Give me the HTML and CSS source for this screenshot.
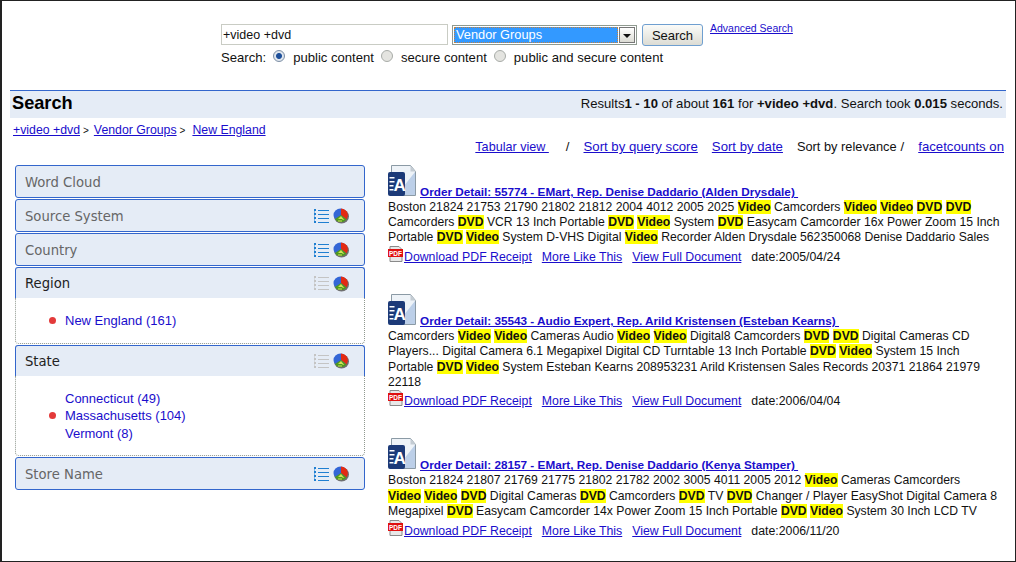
FILE: index.html
```html
<!DOCTYPE html>
<html lang="en">
<head>
    <meta charset="UTF-8">
    <title>Search</title>
    <link rel="stylesheet" href="styles.css">
</head>
<body>
    <svg class="icon-defs" width="0" height="0">
        <defs>
            <g id="list-icon">
                <path d="M0 0h2v2H0zM0 4h2v2H0zM0 8h2v2H0zM0 12h2v2H0zM0 2.500h1v1H0zM0 6.500h1v1H0zM0 10.500h1v1H0z"/>
                <path d="M4 1h11v1H4zM4 5h11v1H4zM4 9h11v1H4zM4 13h11v1H4z"/>
            </g>
            <g id="pie-icon">
                <ellipse cx="8.500" cy="8.500" rx="7.500" ry="7" fill="#6f6f6f"/>
                <ellipse cx="7.500" cy="7" rx="7" ry="6.500" fill="#3366d6"/>
                <path d="M8 7V.500a7 6.500 0 0 1 6.500 8.500l-1 2.500z" fill="#e32a12"/>
                <path d="M8 7l5.500 4.500a7 6.500 0 0 1-11.500-.500z" fill="#4f9a1c"/>
                <path d="M5 11l3-3 2.500 3zM9 12l1-1 1.500 1zM5 12.500h4v1H5z" fill="#cfe25a"/>
            </g>
            <g id="doc-icon">
                <path d="M3.500 .500h19l5 6v24h-24z" fill="#eef3f8" stroke="#8b9aa5"/>
                <path d="M22.500 .500l5 6h-5z" fill="#c4ccd3"/>
                <path d="M12 26l15-19v23H12z" fill="#bccfe8"/>
                <rect x="0" y="7" width="17" height="24" rx="2" fill="#1c3a78"/>
                <rect x="1.500" y="12" width="5" height="1.500" fill="#fff"/>
                <rect x="1.500" y="16" width="5" height="1.500" fill="#fff"/>
                <rect x="1.500" y="20" width="4" height="1.500" fill="#fff"/>
                <rect x="1.500" y="24" width="4" height="1.500" fill="#fff"/>
                <text class="doc-letter" x="5.500" y="26">A</text>
            </g>
            <g id="pdf-icon">
                <path d="M2 .500h9l3 3v12H2z" fill="#e8e8e8" stroke="#8a8a8a"/>
                <rect x="0" y="3" width="15" height="8" fill="#e01010"/>
                <text class="pdf-letters" x="1" y="9.500">PDF</text>
            </g>
        </defs>
    </svg>

    <form class="search-form">
        <div class="search-row">
            <input class="query" type="text" value="+video +dvd">
            <div class="fake-select">
                <span class="fake-select-value">Vendor Groups</span>
                <span class="fake-select-arrow"></span>
            </div>
            <button class="search-btn" type="button">Search</button>
            <a class="advanced" href="#">Advanced Search</a>
        </div>
        <div class="scope-row">
            <span class="scope-label">Search:</span>
            <label class="scope"><span class="radio checked"></span>public content</label>
            <label class="scope"><span class="radio"></span>secure content</label>
            <label class="scope"><span class="radio"></span>public and secure content</label>
        </div>
    </form>

    <div class="title-bar">
        <h1 class="title">Search</h1>
        <div class="summary">Results<b>1 - 10</b> of about <b>161</b> for <b>+video +dvd</b>. Search took <b>0.015</b> seconds.</div>
    </div>

    <div class="crumbs"><a href="#">+video +dvd</a><span class="sep">&gt;</span><a href="#">Vendor Groups</a><span class="sep">&gt;</span><a href="#">New England</a></div>

    <div class="sort-row">
        <a class="tabular" href="#">Tabular view&nbsp;</a>
        <span class="slash">/</span>
        <a href="#">Sort by query score</a>
        <a href="#">Sort by date</a>
        <span class="relevance">Sort by relevance</span>
        <span class="slash-tight">/</span>
        <a href="#">facetcounts on</a>
    </div>

    <div class="main">
        <div class="facets">
            <div class="facet">
                <div class="facet-head"><span class="facet-name">Word Cloud</span></div>
            </div>
            <div class="facet">
                <div class="facet-head">
                    <span class="facet-name">Source System</span>
                    <svg class="list-icon" width="15" height="15" viewBox="0 0 15 15"><use href="#list-icon"/></svg>
                    <svg class="pie-icon" width="16" height="16" viewBox="0 0 16 16"><use href="#pie-icon"/></svg>
                </div>
            </div>
            <div class="facet">
                <div class="facet-head">
                    <span class="facet-name">Country</span>
                    <svg class="list-icon" width="15" height="15" viewBox="0 0 15 15"><use href="#list-icon"/></svg>
                    <svg class="pie-icon" width="16" height="16" viewBox="0 0 16 16"><use href="#pie-icon"/></svg>
                </div>
            </div>
            <div class="facet open">
                <div class="facet-head">
                    <span class="facet-name">Region</span>
                    <svg class="list-icon off" width="15" height="15" viewBox="0 0 15 15"><use href="#list-icon"/></svg>
                    <svg class="pie-icon" width="16" height="16" viewBox="0 0 16 16"><use href="#pie-icon"/></svg>
                </div>
                <ul class="facet-list">
                    <li class="picked"><a href="#">New England (161)</a></li>
                </ul>
            </div>
            <div class="facet open">
                <div class="facet-head">
                    <span class="facet-name">State</span>
                    <svg class="list-icon off" width="15" height="15" viewBox="0 0 15 15"><use href="#list-icon"/></svg>
                    <svg class="pie-icon" width="16" height="16" viewBox="0 0 16 16"><use href="#pie-icon"/></svg>
                </div>
                <ul class="facet-list">
                    <li><a href="#">Connecticut (49)</a></li>
                    <li class="picked"><a href="#">Massachusetts (104)</a></li>
                    <li><a href="#">Vermont (8)</a></li>
                </ul>
            </div>
            <div class="facet">
                <div class="facet-head">
                    <span class="facet-name">Store Name</span>
                    <svg class="list-icon" width="15" height="15" viewBox="0 0 15 15"><use href="#list-icon"/></svg>
                    <svg class="pie-icon" width="16" height="16" viewBox="0 0 16 16"><use href="#pie-icon"/></svg>
                </div>
            </div>
        </div>

        <div class="results">
            <div class="result">
                <div class="result-title">
                    <svg class="doc-icon" width="29" height="31" viewBox="0 0 29 31"><use href="#doc-icon"/></svg>
                    <a href="#">Order Detail: 55774 - EMart, Rep. Denise Daddario (Alden Drysdale)&nbsp;</a>
                </div>
                <p class="snippet">Boston 21824 21753 21790 21802 21812 2004 4012 2005 2025 <mark>Video</mark> Camcorders <mark>Video</mark> <mark>Video</mark> <mark>DVD</mark> <mark>DVD</mark><br>Camcorders <mark>DVD</mark> VCR 13 Inch Portable <mark>DVD</mark> <mark>Video</mark> System <mark>DVD</mark> Easycam Camcorder 16x Power Zoom 15 Inch<br>Portable <mark>DVD</mark> <mark>Video</mark> System D-VHS Digital <mark>Video</mark> Recorder Alden Drysdale 562350068 Denise Daddario Sales</p>
                <div class="result-links">
                    <svg class="pdf-icon" width="15" height="16" viewBox="0 0 15 16"><use href="#pdf-icon"/></svg>
                    <a href="#">Download PDF Receipt</a>
                    <a href="#">More Like This</a>
                    <a href="#">View Full Document</a>
                    <span>date:2005/04/24</span>
                </div>
            </div>
            <div class="result">
                <div class="result-title">
                    <svg class="doc-icon" width="29" height="31" viewBox="0 0 29 31"><use href="#doc-icon"/></svg>
                    <a href="#">Order Detail: 35543 - Audio Expert, Rep. Arild Kristensen (Esteban Kearns)&nbsp;</a>
                </div>
                <p class="snippet">Camcorders <mark>Video</mark> <mark>Video</mark> Cameras Audio <mark>Video</mark> <mark>Video</mark> Digital8 Camcorders <mark>DVD</mark> <mark>DVD</mark> Digital Cameras CD<br>Players... Digital Camera 6.1 Megapixel Digital CD Turntable 13 Inch Portable <mark>DVD</mark> <mark>Video</mark> System 15 Inch<br>Portable <mark>DVD</mark> <mark>Video</mark> System Esteban Kearns 208953231 Arild Kristensen Sales Records 20371 21864 21979<br>22118</p>
                <div class="result-links">
                    <svg class="pdf-icon" width="15" height="16" viewBox="0 0 15 16"><use href="#pdf-icon"/></svg>
                    <a href="#">Download PDF Receipt</a>
                    <a href="#">More Like This</a>
                    <a href="#">View Full Document</a>
                    <span>date:2006/04/04</span>
                </div>
            </div>
            <div class="result">
                <div class="result-title">
                    <svg class="doc-icon" width="29" height="31" viewBox="0 0 29 31"><use href="#doc-icon"/></svg>
                    <a href="#">Order Detail: 28157 - EMart, Rep. Denise Daddario (Kenya Stamper)&nbsp;</a>
                </div>
                <p class="snippet">Boston 21824 21807 21769 21775 21802 21782 2002 3005 4011 2005 2012 <mark>Video</mark> Cameras Camcorders<br><mark>Video</mark> <mark>Video</mark> <mark>DVD</mark> Digital Cameras <mark>DVD</mark> Camcorders <mark>DVD</mark> TV <mark>DVD</mark> Changer / Player EasyShot Digital Camera 8<br>Megapixel <mark>DVD</mark> Easycam Camcorder 14x Power Zoom 15 Inch Portable <mark>DVD</mark> <mark>Video</mark> System 30 Inch LCD TV</p>
                <div class="result-links">
                    <svg class="pdf-icon" width="15" height="16" viewBox="0 0 15 16"><use href="#pdf-icon"/></svg>
                    <a href="#">Download PDF Receipt</a>
                    <a href="#">More Like This</a>
                    <a href="#">View Full Document</a>
                    <span>date:2006/11/20</span>
                </div>
            </div>
        </div>
    </div>
</body>
</html>
```

FILE: styles.css
```css
* {
    margin: 0;
    padding: 0;
    box-sizing: border-box;
}

html, body {
    height: 562px;
    overflow: hidden;
}

body {
    font-family: "Liberation Sans", Arial, sans-serif;
    font-size: 12.2px;
    color: #111;
    background: #fff;
    border: 1px solid #222;
    border-left-width: 2px;
    padding: 0 9px 0 8px;
}

a {
    color: #1a0dcc;
}

.icon-defs {
    position: absolute;
}

.doc-letter {
    font-family: "Liberation Sans", Arial, sans-serif;
    font-size: 17px;
    font-weight: bold;
    fill: #fff;
}

.pdf-letters {
    font-family: "Liberation Sans", Arial, sans-serif;
    font-size: 6.500px;
    font-weight: bold;
    fill: #fff;
}

.search-form {
    height: 89px;
    padding: 22px 0 0 211px;
}

.search-row {
    display: flex;
    align-items: flex-start;
    height: 22px;
}

.query {
    width: 227px;
    height: 21px;
    margin-top: 1px;
    padding-left: 1px;
    border: 1px solid #c9ccc4;
    font-family: inherit;
    font-size: 12.500px;
    color: #111;
}

.fake-select {
    width: 185px;
    height: 20px;
    margin: 2px 0 0 4px;
    padding: 1px;
    display: flex;
    border: 1px solid #8f9a90;
    background: #fff;
}

.fake-select-value {
    flex: 1;
    padding-left: 2px;
    background: #3399ff;
    color: #fff;
    font-size: 12.800px;
    line-height: 16px;
    outline: 1px dotted #c08040;
    outline-offset: -1px;
}

.fake-select-arrow {
    width: 16px;
    margin-left: 1px;
    position: relative;
    background: linear-gradient(#fff, #dcdcd4);
    border: 1px solid #777;
}

.fake-select-arrow::after {
    content: "";
    position: absolute;
    left: 3px;
    top: 6px;
    border-left: 4px solid transparent;
    border-right: 4px solid transparent;
    border-top: 4px solid #111;
}

.search-btn {
    width: 61px;
    height: 22px;
    margin: 1px 0 0 5px;
    border: 1px solid #6f9fd0;
    border-radius: 3px;
    background: linear-gradient(#fbfbf8, #dcdcd4);
    font-family: inherit;
    font-size: 13px;
    color: #111;
}

.advanced {
    margin: 0 0 0 7px;
    font-size: 10.500px;
    line-height: 11px;
}

.scope-row {
    display: flex;
    align-items: center;
    height: 18px;
    margin-top: 3px;
    font-size: 13.100px;
}

.scope-label {
    margin-right: 7px;
}

.scope {
    display: flex;
    align-items: center;
    margin-right: 7px;
}

.radio {
    width: 12px;
    height: 12px;
    margin-right: 8px;
    margin-top: -3px;
    border-radius: 50%;
    background: #e4e4e0;
    border: 1px solid #a8aca8;
}

.radio.checked {
    background: radial-gradient(circle, #1d4f9a 0 2.500px, #dfe6ee 3.500px);
    border-color: #7d8fa5;
}

.title-bar {
    display: flex;
    justify-content: space-between;
    align-items: center;
    height: 28px;
    padding: 0 3px 2px 2px;
    border-top: 1px solid #3366cc;
    background: #e5ecf6;
}

.title {
    font-size: 18.200px;
    color: #000;
}

.summary {
    font-size: 13.100px;
}

.crumbs {
    height: 21px;
    padding: 5px 0 0 3px;
    font-size: 12.300px;
    line-height: 14px;
}

.sep {
    margin: 0 5px 0 3px;
    font-size: 10px;
}

.sep + a + .sep {
    margin-right: 7px;
}

.sort-row {
    display: flex;
    justify-content: flex-end;
    align-items: baseline;
    height: 18px;
    padding-right: 2px;
    gap: 14px;
    font-size: 13.200px;
    line-height: 15px;
}

.tabular {
    font-size: 12.600px;
}

.relevance {
    font-size: 12.800px;
}

.slash {
    margin: 0 0 0 3px;
}

.slash-tight {
    margin: 0 0 0 -10px;
}

.main {
    display: flex;
    margin-top: 8px;
    align-items: flex-start;
}

.facets {
    width: 350px;
    margin-left: 5px;
}

.facet {
    margin-bottom: 1px;
}

.facet-head {
    display: flex;
    align-items: center;
    height: 33px;
    padding: 1px 15px 0 9px;
    background: #e5ecf6;
    border: 1px solid #3366cc;
    border-radius: 3px;
}

.facet.open .facet-head {
    height: 31px;
    border-bottom: none;
    border-radius: 3px 3px 0 0;
}

.facet-name {
    flex: 1;
    font-family: "DejaVu Sans", Verdana, sans-serif;
    font-size: 13.200px;
    color: #666;
}

.facet.open .facet-name {
    color: #222;
}

.list-icon {
    fill: #1f7fd1;
    margin-right: 4px;
}

.list-icon.off {
    fill: #c4c4c4;
}

.facet-list {
    list-style: none;
    padding: 14px 0 13px 49px;
    font-size: 13px;
    border: 1px dotted #8f988f;
    border-top: none;
    border-radius: 0 0 4px 4px;
}

.facet-list li {
    position: relative;
    line-height: 17.500px;
}

.facet-list a {
    text-decoration: none;
}

.picked::before {
    content: "";
    position: absolute;
    left: -16px;
    top: 5px;
    width: 7px;
    height: 7px;
    border-radius: 50%;
    background: #e33a3a;
}

.results {
    width: 618px;
    margin-left: 23px;
}

.result {
    margin-bottom: 30px;
}

.result-title {
    display: flex;
    align-items: flex-end;
    height: 35px;
}

.result-title a {
    font-size: 11.750px;
    font-weight: bold;
    line-height: 14px;
    margin: 0 0 1px 3px;
    white-space: pre;
}

.doc-icon {
    flex: none;
    align-self: flex-start;
}

.snippet {
    line-height: 15.200px;
    white-space: nowrap;
}

mark {
    background: #ffff00;
    font-weight: bold;
    color: #111;
}

.result-links {
    display: flex;
    align-items: flex-end;
    height: 18.500px;
    gap: 10px;
    font-size: 12.300px;
    line-height: 14px;
}

.result-links a:first-of-type {
    margin-left: -9px;
}

.pdf-icon {
    margin-bottom: 2px;
}
```
